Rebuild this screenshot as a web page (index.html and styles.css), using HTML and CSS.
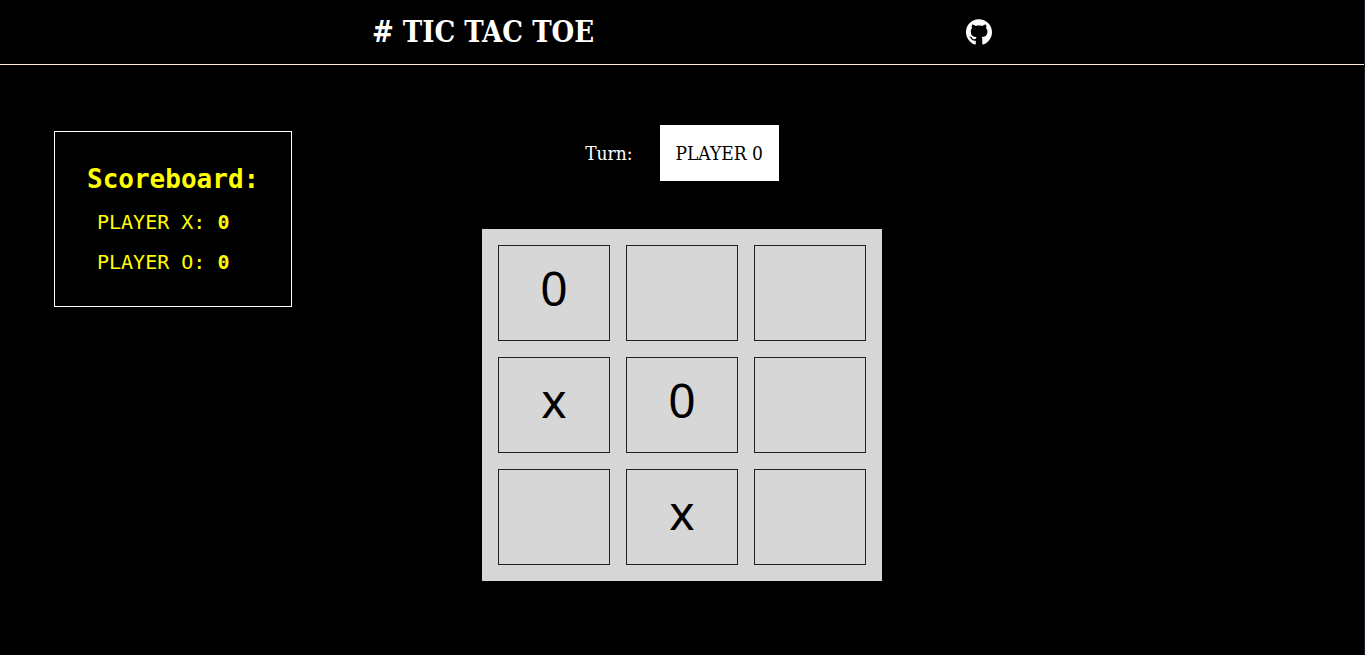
FILE: index.html
```html
<!DOCTYPE html>
<html lang="en">
<head>
<meta charset="utf-8">
<meta name="viewport" content="width=device-width, initial-scale=1">
<title>Tic Tac Toe</title>
<link rel="stylesheet" href="styles.css">
</head>
<body>
<header class="header">
  <h1 class="title"># TIC TAC TOE</h1>
  <a class="github" href="#" aria-label="GitHub">
    <svg class="github-icon" viewBox="0 8 496 488" aria-hidden="true"><path fill="currentColor" d="M244.8 8C106.1 8 0 113.3 0 252c0 110.9 69.8 205.8 169.5 239.2 12.8 2.3 17.3-5.6 17.3-12.1 0-6.2-.3-40.4-.3-61.4 0 0-70 15-84.7-29.8 0 0-11.4-29.1-27.8-36.6 0 0-22.9-15.7 1.6-15.4 0 0 24.9 2 38.6 25.8 21.9 38.6 58.6 27.5 72.9 20.9 2.3-16 8.8-27.1 16-33.7-55.9-6.2-112.3-14.3-112.3-110.5 0-27.5 7.6-41.3 23.6-58.9-2.6-6.5-11.1-33.3 2.6-67.9 20.9-6.5 69 27 69 27 20-5.6 41.5-8.5 62.8-8.5s42.8 2.9 62.8 8.5c0 0 48.1-33.6 69-27 13.7 34.7 5.2 61.4 2.6 67.9 16 17.7 25.8 31.5 25.8 58.9 0 96.5-58.9 104.2-114.8 110.5 9.2 7.9 17 22.9 17 46.4 0 33.7-.3 75.4-.3 83.6 0 6.5 4.6 14.4 17.3 12.1C428.2 457.8 496 362.9 496 252 496 113.3 383.5 8 244.8 8z"/></svg>
  </a>
</header>
<main class="main">
  <aside class="scoreboard">
    <h2 class="scoreboard-title">Scoreboard:</h2>
    <p class="score">PLAYER X: <b>0</b></p>
    <p class="score">PLAYER O: <b>0</b></p>
  </aside>
  <section class="game">
    <div class="turn">
      <span>Turn:</span>
      <span class="player">PLAYER 0</span>
    </div>
    <div class="board">
      <button class="cell" type="button">0</button>
      <button class="cell" type="button" aria-label="Empty"></button>
      <button class="cell" type="button" aria-label="Empty"></button>
      <button class="cell" type="button">x</button>
      <button class="cell" type="button">0</button>
      <button class="cell" type="button" aria-label="Empty"></button>
      <button class="cell" type="button" aria-label="Empty"></button>
      <button class="cell" type="button">x</button>
      <button class="cell" type="button" aria-label="Empty"></button>
    </div>
  </section>
</main>
</body>
</html>
```
FILE: styles.css
```css
* {
  box-sizing: border-box;
}

body {
  min-height: 100vh;
  margin: 0;
  border-right: 1px solid #10182a;
  background: #000;
  color: #fff;
  font-family: "DejaVu Serif Condensed", "DejaVu Serif", serif;
}

.header {
  display: flex;
  justify-content: space-evenly;
  align-items: center;
  padding: 12px 0;
  border-bottom: 1px solid #ffebcd;
}

.title {
  margin: 0;
  font-size: 29px;
  line-height: 40px;
}

.github {
  display: flex;
  color: #fff;
}

.github-icon {
  width: 26px;
  height: 26px;
}

.main {
  display: grid;
  grid-template-columns: 1fr auto 1fr;
  align-items: start;
  padding: 60px 0;
}

.scoreboard {
  justify-self: start;
  margin: 6px 0 0 54px;
  padding: 32px;
  border: 1px solid #fff;
  color: #ff0;
  font-family: "DejaVu Sans Mono", monospace;
}

.scoreboard-title {
  margin: 0;
  font-size: 26px;
  line-height: 30px;
}

.score {
  margin: 16px 0 0 10px;
  font-size: 20px;
  line-height: 24px;
}

.game {
  display: flex;
  flex-direction: column;
  align-items: center;
  gap: 48px;
}

.turn {
  display: flex;
  align-items: center;
  gap: 27px;
  font-size: 19px;
  line-height: 24px;
}

.player {
  padding: 16px;
  background: #fff;
  color: #000;
}

.board {
  display: grid;
  grid-template-columns: repeat(3, 112px);
  grid-auto-rows: 96px;
  gap: 16px;
  padding: 16px;
  background: #d7d7d7;
}

.cell {
  padding: 0 0 10px;
  border: 1px solid #222;
  background: transparent;
  color: #000;
  font-family: "Noto Sans", sans-serif;
  font-size: 48px;
  line-height: 64px;
}
```
